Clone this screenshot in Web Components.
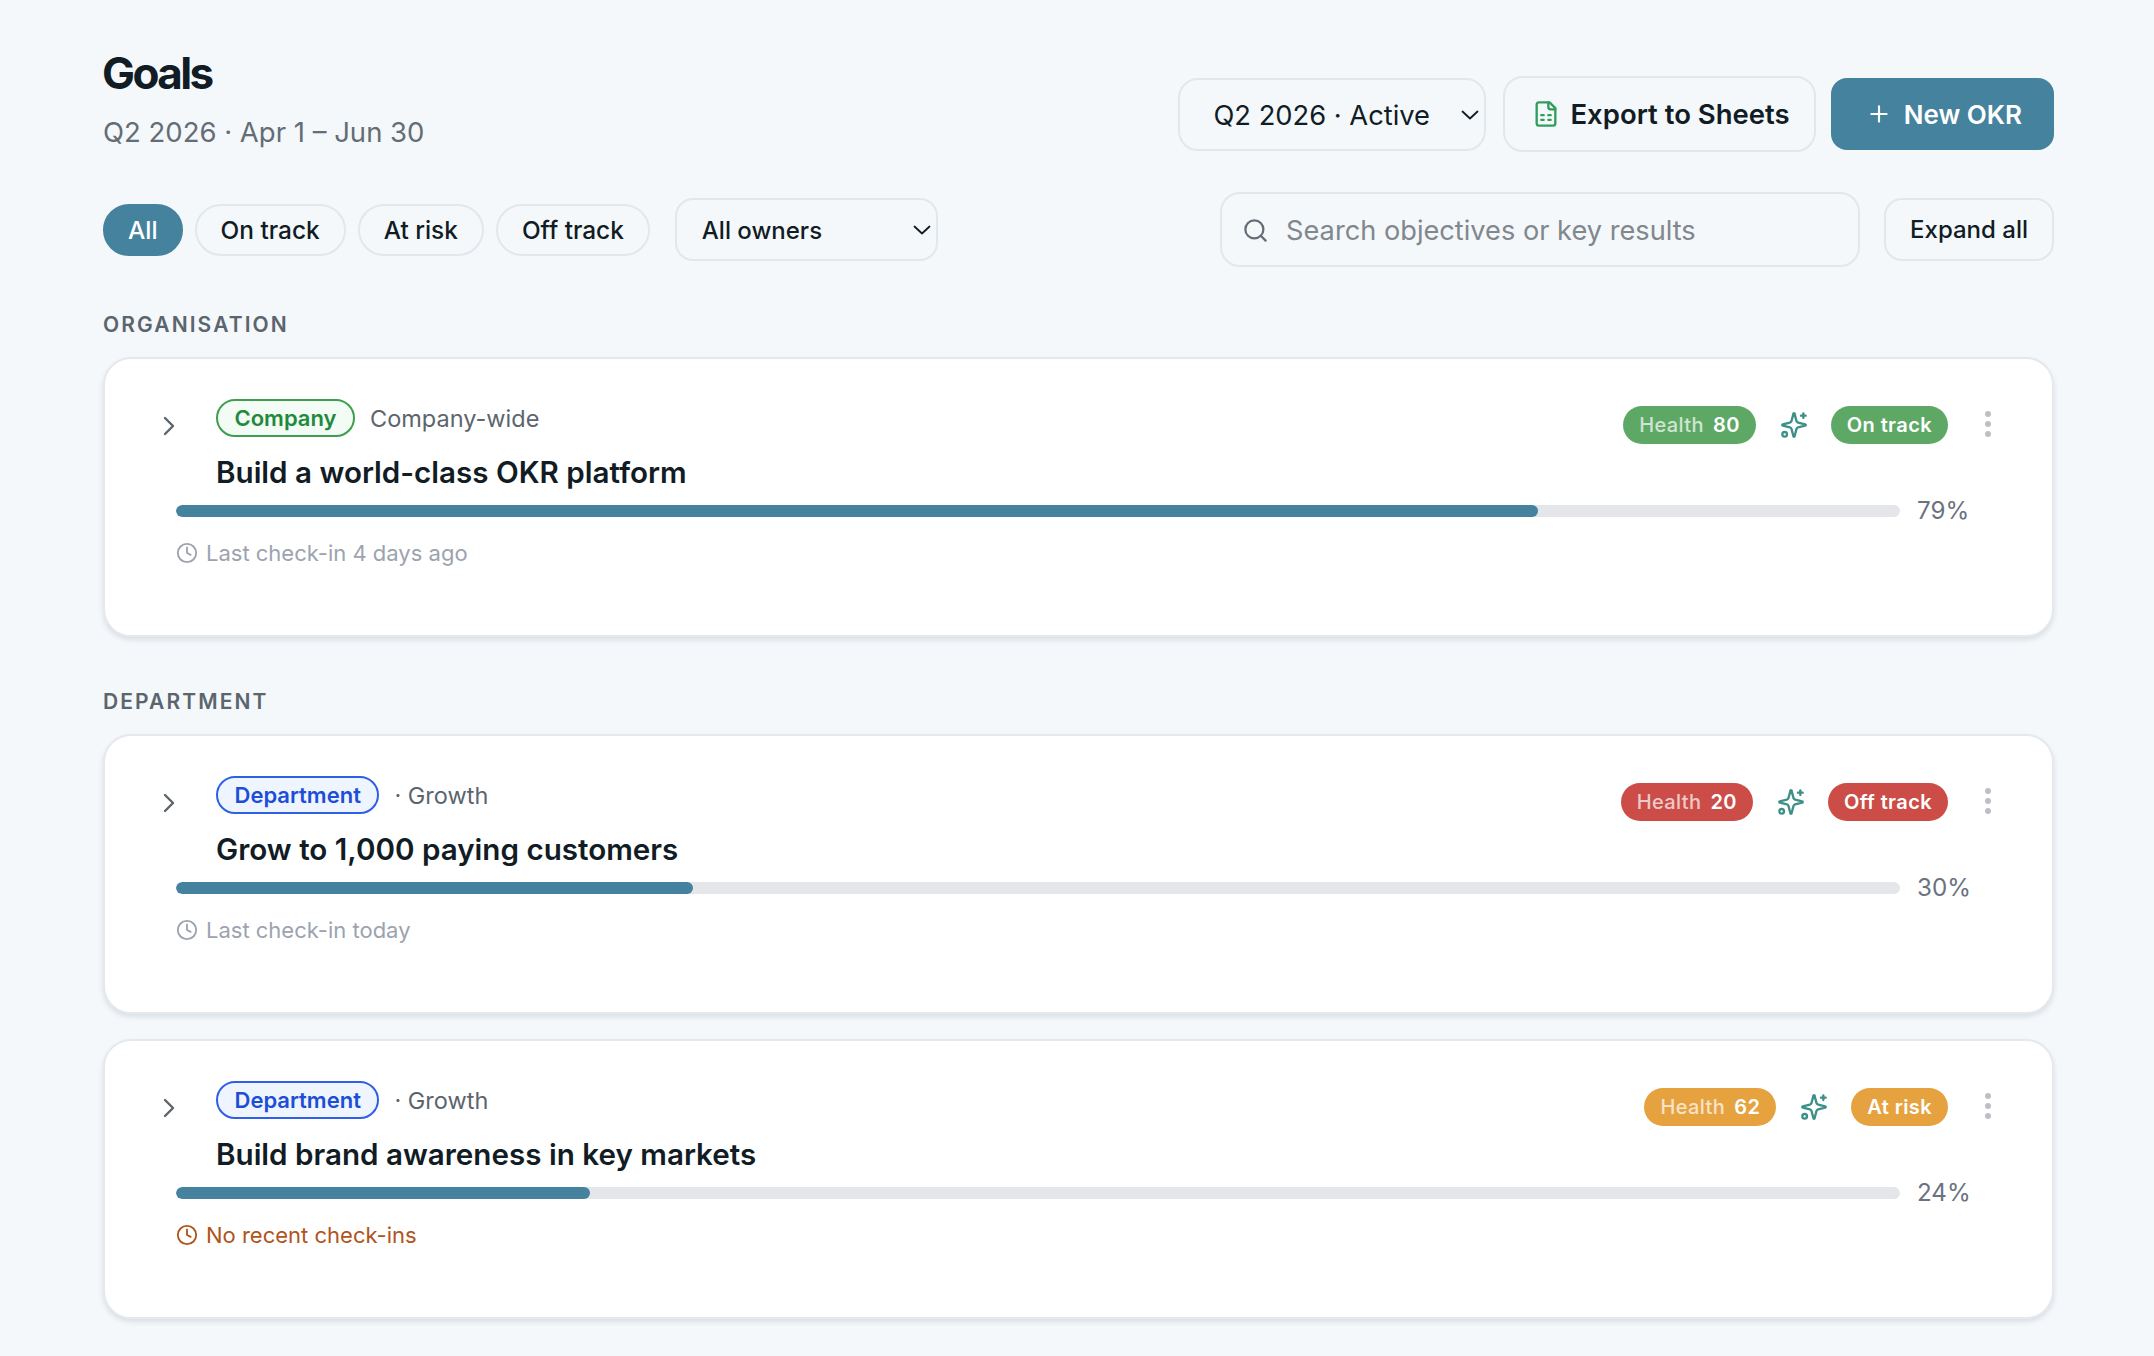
<!DOCTYPE html>
<html>
<head>
<meta charset="utf-8">
<title>Goals</title>
<style>
  html, body { margin: 0; padding: 0; }
  body {
    background: #f4f8fb;
    font-family: Inter, "Liberation Sans", sans-serif;
    color: #111c24;
  }
</style>
</head>
<body>

<goals-page>
  <page-header slot="header" title="Goals" subtitle="Q2 2026 · Apr 1 – Jun 30"></page-header>
  <filter-bar slot="filters"></filter-bar>

  <goal-section label="ORGANISATION">
    <goal-card scope="company" scope-label="Company" team="Company-wide"
      name="Build a world-class OKR platform" health="80" status="On track" tone="green"
      percent="79" checkin="Last check-in 4 days ago"></goal-card>
  </goal-section>

  <goal-section label="DEPARTMENT">
    <goal-card scope="department" scope-label="Department" team="· Growth"
      name="Grow to 1,000 paying customers" health="20" status="Off track" tone="red"
      percent="30" checkin="Last check-in today"></goal-card>
    <goal-card scope="department" scope-label="Department" team="· Growth"
      name="Build brand awareness in key markets" health="62" status="At risk" tone="amber"
      percent="24" checkin="No recent check-ins" stale></goal-card>
  </goal-section>
</goals-page>

<script>
const chevronDown = `<svg width="18" height="10" viewBox="0 0 18 10" fill="none" stroke="currentColor" stroke-width="1.8" stroke-linecap="round" stroke-linejoin="round"><path d="m1.5 1.5 7.5 7 7.5-7"/></svg>`;

class GoalsPage extends HTMLElement {
  constructor() {
    super();
    this.attachShadow({mode: 'open'});
    this.shadowRoot.innerHTML = `
      <style>
        :host { display: block; padding: 37px 100px 37px 103px; }
        .sections { display: flex; flex-direction: column; gap: 52px; margin-top: 45px; }
      </style>
      <slot name="header"></slot>
      <slot name="filters"></slot>
      <div class="sections"><slot></slot></div>
    `;
  }
}
customElements.define('goals-page', GoalsPage);

class PageHeader extends HTMLElement {
  constructor() {
    super();
    this.attachShadow({mode: 'open'});
    this.shadowRoot.innerHTML = `
      <style>
        :host { display: flex; justify-content: space-between; align-items: flex-end; height: 115px; }
        h1 { margin: 0 0 0 -1px; font-size: 44px; line-height: 72px; font-weight: 700; letter-spacing: -2.6px; }
        p { margin: 4px 0 1px; font-size: 27.5px; line-height: 38px; color: #646d75; }
        .actions { display: flex; align-items: center; gap: 15px; }
        .select, .btn { box-sizing: border-box; display: flex; align-items: center; }
        .select {
          width: 308px; height: 73px; margin-right: 2px; padding: 2px 5px 0 33px; justify-content: space-between;
          border: 2px solid #e2e7eb; border-radius: 20px; font-size: 27.3px;
        }
        .btn { font-weight: 600; font-size: 27.5px; border-radius: 20px; }
        .export { height: 76px; padding: 0 24px 0 27px; gap: 10px; border: 2px solid #e2e7eb; }
        .new { height: 72px; padding: 0 32px 0 35px; gap: 12px; background: #44829d; color: #fff; font-size: 26px; border-radius: 16px; }
      </style>
      <div>
        <h1>${this.getAttribute('title')}</h1>
        <p>${this.getAttribute('subtitle')}</p>
      </div>
      <div class="actions">
        <div class="select"><span>Q2 2026 · Active</span>${chevronDown}</div>
        <div class="btn export">
          <svg width="28" height="28" viewBox="0 0 24 24" fill="none" stroke="#2f9e5b" stroke-width="2" stroke-linecap="round" stroke-linejoin="round">
            <path d="M15 2H6a2 2 0 0 0-2 2v16a2 2 0 0 0 2 2h12a2 2 0 0 0 2-2V7Z"/><path d="M14 2v4a2 2 0 0 0 2 2h4"/>
            <path d="M8 13h2M14 13h2M8 17h2M14 17h2"/>
          </svg>
          <span>Export to Sheets</span>
        </div>
        <div class="btn new">
          <svg width="26" height="26" viewBox="0 0 24 24" fill="none" stroke="currentColor" stroke-width="2" stroke-linecap="round"><path d="M5 12h14M12 5v14"/></svg>
          <span>New OKR</span>
        </div>
      </div>
    `;
  }
}
customElements.define('page-header', PageHeader);

class FilterBar extends HTMLElement {
  constructor() {
    super();
    this.attachShadow({mode: 'open'});
    this.shadowRoot.innerHTML = `
      <style>
        :host { display: flex; align-items: center; height: 75px; margin-top: 40px; font-size: 24.4px; }
        .pill {
          box-sizing: border-box; height: 52px; padding: 1px 24px 0; display: flex; align-items: center;
          border: 2px solid #e2e7eb; border-radius: 26px; font-weight: 500; margin-right: 12px;
        }
        .pill.on { background: #44829d; border-color: #44829d; color: #fff; padding: 1px 23px 0; }
        .owners {
          box-sizing: border-box; width: 263px; height: 63px; margin-left: 13px; padding: 1px 5px 0 25px;
          display: flex; align-items: center; justify-content: space-between;
          border: 2px solid #e2e7eb; border-radius: 18px; font-weight: 500; font-size: 24px;
        }
        .search {
          box-sizing: border-box; width: 640px; height: 75px; margin-left: auto; padding: 1px 20px 0;
          display: flex; align-items: center; gap: 17px; color: #80878d; font-size: 27.2px;
          border: 2px solid #e2e7eb; border-radius: 20px;
        }
        .expand {
          box-sizing: border-box; height: 63px; margin-left: 24px; padding: 0 24px; display: flex; align-items: center;
          border: 2px solid #e2e7eb; border-radius: 18px; font-weight: 500; font-size: 24px;
        }
      </style>
      <div class="pill on">All</div>
      <div class="pill">On track</div>
      <div class="pill">At risk</div>
      <div class="pill">Off track</div>
      <div class="owners"><span>All owners</span>${chevronDown}</div>
      <div class="search">
        <svg width="27" height="27" viewBox="0 0 24 24" fill="none" stroke="#646d75" stroke-width="2" stroke-linecap="round"><circle cx="11" cy="11" r="8"/><path d="m21 21-4.3-4.3"/></svg>
        <span>Search objectives or key results</span>
      </div>
      <div class="expand">Expand all</div>
    `;
  }
}
customElements.define('filter-bar', FilterBar);

class GoalSection extends HTMLElement {
  constructor() {
    super();
    this.attachShadow({mode: 'open'});
    this.shadowRoot.innerHTML = `
      <style>
        :host { display: block; }
        h2 { margin: 0 0 19px; font-size: 21px; line-height: 26px; font-weight: 600; letter-spacing: 2.1px; color: #5b656d; }
        .list { display: flex; flex-direction: column; gap: 25px; }
      </style>
      <h2>${this.getAttribute('label')}</h2>
      <div class="list"><slot></slot></div>
    `;
  }
}
customElements.define('goal-section', GoalSection);

const scopes = {
  company: 'color:#1f8a3d;border-color:#3f9e4d;background:#f2fbf4',
  department: 'color:#1d4ed8;border-color:#2f5fe6;background:#eff5ff',
};
const tones = { green: '#5ea866', red: '#cc4c47', amber: '#e6a23f' };

class GoalCard extends HTMLElement {
  constructor() {
    super();
    this.attachShadow({mode: 'open'});
    const a = n => this.getAttribute(n);
    const tone = tones[a('tone')];
    const stale = this.hasAttribute('stale');
    this.shadowRoot.innerHTML = `
      <style>
        :host {
          display: block; box-sizing: border-box; height: 280px; padding: 40px 85px 0 71px;
          background: #fff; border: 2px solid #e5e9ed; border-radius: 28px;
          box-shadow: 0 3px 5px rgba(30,50,70,.12);
        }
        .head { display: flex; align-items: flex-start; }
        .chev { width: 55px; margin-left: -15px; padding-top: 15px; flex: none; color: #5b656d; }
        .main { flex: 1; }
        .meta { display: flex; align-items: center; gap: 15px; height: 38px; font-size: 23.5px; color: #5b656d; }
        .badge {
          box-sizing: border-box; height: 38px; padding: 0 16.5px; display: flex; align-items: center;
          border: 2px solid; border-radius: 19px; font-size: 22px; font-weight: 600;
        }
        h3 { margin: 15px 0 0; font-size: 29.6px; line-height: 40px; font-weight: 600; }
        .side { display: flex; align-items: center; margin: 7px -25px 0 0; }
        .tag {
          box-sizing: border-box; height: 38px; padding: 0 16px; display: flex; align-items: center; gap: 9px;
          border-radius: 19px; background: ${tone}; color: #fff; font-size: 20px; font-weight: 600; letter-spacing: .4px;
        }
        .tag i { font-style: normal; font-weight: 500; opacity: .7; }
        .tag b { font-weight: 600; }
        .spark { margin: 0 23px 0 24px; display: block; color: #3d9088; }
        .dots { margin: 0 0 3px 36px; display: block; }
        .bar { display: flex; align-items: center; gap: 17px; margin-top: 6px; }
        .track { flex: 1; height: 12px; border-radius: 6px; background: #e4e6ea; overflow: hidden; }
        .fill { height: 100%; border-radius: 6px; background: #44829d; width: ${a('percent')}%; }
        .pct { font-size: 24.2px; line-height: 26px; color: #6b7280; width: 50px; white-space: nowrap; }
        .check {
          display: flex; align-items: center; gap: 8px; margin-top: 14px; font-size: 22px; line-height: 30px;
          color: ${stale ? '#b0541b' : '#9ca3af'};
        }
      </style>
      <div class="head">
        <div class="chev"><svg width="20" height="24" viewBox="0 0 20 24" fill="none" stroke="currentColor" stroke-width="2.4" stroke-linecap="round" stroke-linejoin="round" style="display:block"><path d="m4 4 8 8-8 8"/></svg></div>
        <div class="main">
          <div class="meta"><span class="badge" style="${scopes[a('scope')]}">${a('scope-label')}</span><span>${a('team')}</span></div>
          <h3>${a('name')}</h3>
        </div>
        <div class="side">
          <span class="tag"><i>Health</i><b>${a('health')}</b></span>
          <svg class="spark" width="28" height="28" viewBox="0 0 24 24" fill="none" stroke="currentColor" stroke-width="2" stroke-linecap="round" stroke-linejoin="round">
            <path d="M9.9 15.5a2 2 0 0 0-1.4-1.4l-6.1-1.6a.5.5 0 0 1 0-1l6.1-1.6a2 2 0 0 0 1.4-1.4l1.6-6.1a.5.5 0 0 1 1 0l1.6 6.1a2 2 0 0 0 1.4 1.4l6.1 1.6a.5.5 0 0 1 0 1l-6.1 1.6a2 2 0 0 0-1.4 1.4l-1.6 6.1a.5.5 0 0 1-1 0z"/>
            <path d="M20 2v4M22 4h-4"/><circle cx="4" cy="20" r="2"/>
          </svg>
          <span class="tag">${a('status')}</span>
          <svg class="dots" width="8" height="28" viewBox="0 0 8 28" fill="#bdbfc4"><circle cx="4" cy="4" r="3"/><circle cx="4" cy="14" r="3"/><circle cx="4" cy="24" r="3"/></svg>
        </div>
      </div>
      <div class="bar">
        <div class="track"><div class="fill"></div></div>
        <span class="pct">${a('percent')}%</span>
      </div>
      <div class="check">
        <svg width="22" height="22" viewBox="0 0 24 24" fill="none" stroke="currentColor" stroke-width="2" stroke-linecap="round" stroke-linejoin="round"><circle cx="12" cy="12" r="10"/><path d="M12 6v6l4 2"/></svg>
        <span>${a('checkin')}</span>
      </div>
    `;
  }
}
customElements.define('goal-card', GoalCard);
</script>
</body>
</html>
